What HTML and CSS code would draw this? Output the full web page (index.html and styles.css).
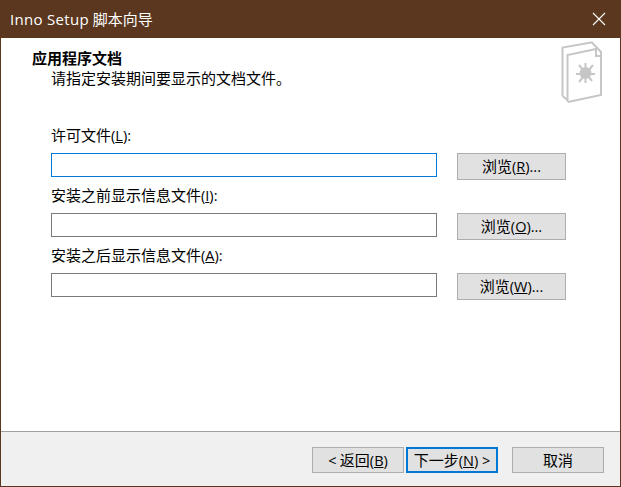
FILE: index.html
```html
<!DOCTYPE html>
<html lang="zh-CN">
<head>
<meta charset="utf-8">
<title>Inno Setup 脚本向导</title>
<link rel="stylesheet" href="styles.css">
</head>
<body>
<div class="window">
  <header class="titlebar">
    <span class="title"><span class="latin">Inno Setup</span> 脚本向导</span>
    <svg class="close" width="14" height="14" viewBox="0 0 14 14"><path d="M1 1l12 12M13 1L1 13" stroke="#fff" stroke-width="1.1" fill="none"/></svg>
  </header>
  <main class="content">
    <h1 class="heading">应用程序文档</h1>
    <p class="subtitle">请指定安装期间要显示的文档文件。</p>
    <svg class="docicon" width="44" height="64" viewBox="0 0 44 64" fill="none" stroke="#c6c6c6" stroke-width="2">
      <path d="M2.5 56V7.5L31 2.5"/>
      <path d="M2.5 56l5 4"/>
      <path d="M7.5 62V15L36 9"/>
      <path d="M31 2.5h1L41 12v4h-5V8"/>
      <path d="M41 15v40L8 62"/>
      <path d="M19 25l13 16M33 25L19 42M25.5 23v20M16 34h19" stroke-width="2"/>
      <circle cx="25.5" cy="33" r="6" fill="#c6c6c6" stroke="none"/>
    </svg>
    <form class="fields">
      <label class="label">许可文件<span class="paren">(<u>L</u>):</span></label>
      <div class="row">
        <input class="input focused" type="text">
        <button class="btn browse" type="button">浏览<span class="paren">(<u>R</u>)...</span></button>
      </div>
      <label class="label">安装之前显示信息文件<span class="paren">(<u>I</u>):</span></label>
      <div class="row">
        <input class="input" type="text">
        <button class="btn browse" type="button">浏览<span class="paren">(<u>O</u>)...</span></button>
      </div>
      <label class="label">安装之后显示信息文件<span class="paren">(<u>A</u>):</span></label>
      <div class="row">
        <input class="input" type="text">
        <button class="btn browse" type="button">浏览<span class="paren">(<u>W</u>)...</span></button>
      </div>
    </form>
  </main>
  <footer class="footer">
    <button class="btn nav" type="button"><span class="paren">&lt;</span> 返回<span class="paren">(<u>B</u>)</span></button>
    <button class="btn nav default" type="button">下一步<span class="paren">(<u>N</u>) &gt;</span></button>
    <button class="btn nav cancel" type="button">取消</button>
  </footer>
</div>
</body>
</html>
```
FILE: styles.css
```css
* { box-sizing: border-box; }
html, body { margin: 0; padding: 0; }
body {
  width: 621px;
  height: 487px;
  overflow: hidden;
  font-family: "Noto Sans CJK SC", sans-serif;
  font-size: 15px;
  color: #000;
}
.window {
  width: 621px;
  height: 487px;
  display: flex;
  flex-direction: column;
  border: 1px solid #5a371e;
  border-top: 0;
  background: #fff;
}
.titlebar {
  height: 38px;
  margin: 0 -1px;
  flex: none;
  background: #5a371e;
  color: #fff;
  display: flex;
  align-items: center;
  justify-content: space-between;
  padding: 0 15px 0 10px;
}
.title {
  font-family: "Open Sans", "Noto Sans CJK SC", sans-serif;
  font-size: 15px;
  line-height: 20px;
}
.latin { letter-spacing: 0.3px; }
.content {
  flex: 1;
  position: relative;
  padding: 10px 0 0 31px;
}
.heading {
  margin: 0;
  font-size: 15px;
  line-height: 20px;
  font-weight: 700;
}
.subtitle {
  margin: 0 0 0 19px;
  line-height: 20px;
}
.docicon {
  position: absolute;
  top: 2px;
  right: 16px;
}
.fields {
  margin: 37px 0 0 19px;
  display: flex;
  flex-direction: column;
}
.label {
  height: 20px;
  line-height: 20px;
  margin-bottom: 8px;
  display: block;
}
.row {
  display: flex;
  gap: 20px;
  height: 32px;
  align-items: flex-start;
}
.paren {
  font-family: "Open Sans", sans-serif;
  font-size: 14.5px;
}
.input {
  width: 386px;
  height: 24px;
  border: 1px solid #7a7a7a;
  background: #fff;
  padding: 0;
  outline: none;
}
.input.focused { border-color: #0078d7; }
.btn {
  flex: none;
  font-family: inherit;
  font-size: 15px;
  line-height: 20px;
  color: #000;
  background: #e1e1e1;
  border: 1px solid #adadad;
  padding: 0;
  white-space: nowrap;
}
.browse { width: 109px; height: 27px; }
.footer {
  flex: none;
  height: 55px;
  background: #f0f0f0;
  border-top: 1px solid #a0a0a0;
  display: flex;
  padding: 15px 0 0 311px;
  align-items: flex-start;
  gap: 2px;
}
.nav { width: 92px; height: 26px; }
.default { border: 2px solid #0078d7; }
.cancel { margin-left: 12px; }
```
